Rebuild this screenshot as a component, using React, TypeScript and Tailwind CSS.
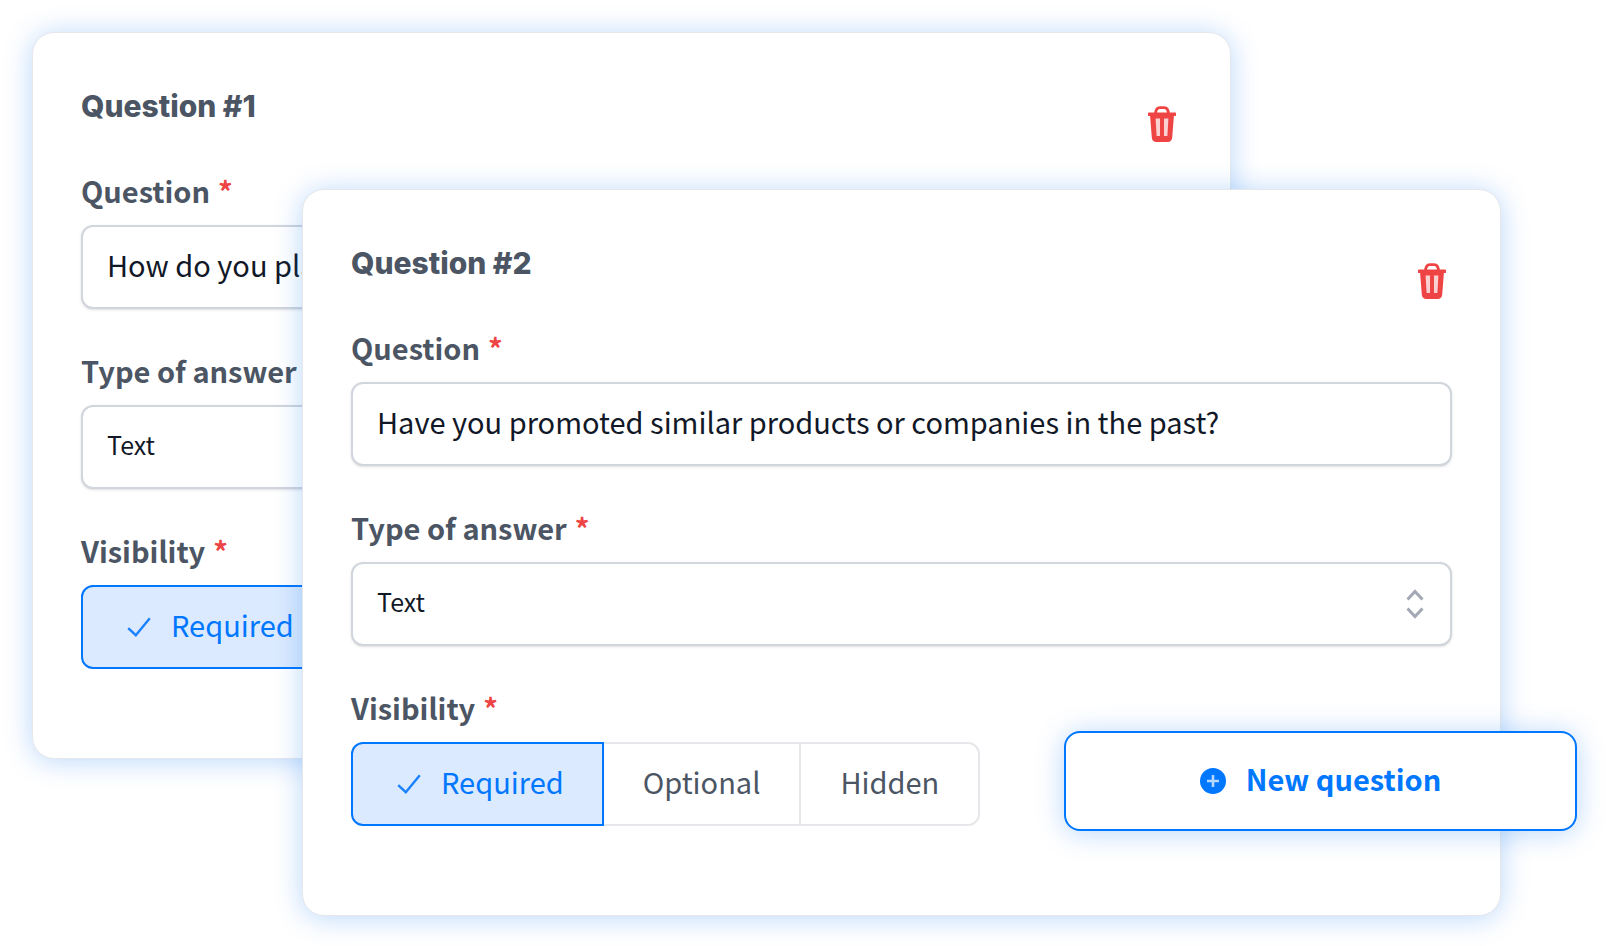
import { useState, type ReactNode } from "react";

const GLOW = "shadow-[0_2px_28px_rgba(0,110,240,0.28)]";

function TrashIcon() {
  return (
    <svg viewBox="0 0 28 36" className="h-9 w-7" aria-hidden="true">
      <path d="M7.500 8.500C7.500 4 9 1.600 12 1.600h4c3 0 4.500 2.400 4.500 6.900" fill="none" stroke="#ef4444" strokeWidth="2.800" />
      <path d="M1 6.600h26a1 1 0 0 1 0 3.400h-1.100L24.200 31.500A4.500 4.500 0 0 1 19.700 36H8.300A4.500 4.500 0 0 1 3.800 31.500L2.100 10H1a1 1 0 0 1 0-3.400z" fill="#ef4444" />
      <path d="M7.600 12.500h4.400v17.500H8.600zM16 12.500h4.400l-1 17.500H16z" fill="#fbd0d0" />
    </svg>
  );
}

function CheckIcon() {
  return (
    <svg viewBox="0 0 24 20" className="h-5 w-6" fill="none" stroke="#1a82ff" strokeWidth="2.400" aria-hidden="true">
      <path d="M1.200 11.200l7.600 7L22.800 1.200" />
    </svg>
  );
}

function SelectorIcon() {
  return (
    <svg viewBox="0 0 18 30" className="pointer-events-none absolute right-7 top-[27px] h-[30px] w-[18px]" fill="none" stroke="#a3a9b4" strokeWidth="3" aria-hidden="true">
      <path d="M1.500 10.500L9 2.500l7.500 8M1.500 19.500l7.500 8 7.500-8" />
    </svg>
  );
}

function PlusCircleIcon() {
  return (
    <svg viewBox="0 0 26 26" className="size-[26px]" aria-hidden="true">
      <circle cx="13" cy="13" r="13" fill="#0077ff" />
      <path d="M13 7v12M7 13h12" stroke="#b5d8ff" strokeWidth="2.600" />
    </svg>
  );
}

function Star() {
  return <span className="ml-2 text-[#ef4444]">*</span>;
}

const LABEL = "block text-[29px] leading-10 font-bold text-[#4b5563]";
const FIELD =
  "block h-[84px] w-full rounded-xl border-2 border-gray-300 bg-white px-6 text-[#111827] shadow-sm outline-none";

function Choice({ name, text, checked, onSelect, shape }: { name: string; text: string; checked: boolean; onSelect: () => void; shape: string }) {
  return (
    <label
      className={`flex h-[84px] cursor-pointer items-center gap-5 border-2 text-[29px] leading-10 ${shape} ${
        checked ? "z-10 border-[#0077ff] bg-blue-100 pr-[38px] pl-11 text-[#0077ff]" : "border-gray-200 bg-white px-[39px] text-[#4b5563]"
      }`}
    >
      <input type="radio" name={name} checked={checked} onChange={onSelect} className="sr-only" />
      {checked && <CheckIcon />}
      <span className="pb-1.5">{text}</span>
    </label>
  );
}

function QuestionCard({ number, question, className, children }: { number: number; question: string; className: string; children?: ReactNode }) {
  const [visibility, setVisibility] = useState("Required");
  const [text, setText] = useState(question);
  const id = `question-${number}`;
  const shapes: Record<string, string> = {
    Required: "rounded-l-xl",
    Optional: "-ml-0.5",
    Hidden: "-ml-0.5 rounded-r-xl",
  };
  return (
    <section className={`relative isolate col-start-1 row-start-1 rounded-[22px] border border-gray-200 bg-white px-12 pt-[53px] pb-[89px] ${GLOW} ${className}`}>
      <div className="mb-11 flex h-10 items-start justify-between">
        <h2 className="font-['Inter',sans-serif] text-[30px] leading-10 font-extrabold text-[#4b5563]">Question #{number}</h2>
        <button type="button" aria-label={`Delete question ${number}`} className="mt-5 mr-1.5">
          <TrashIcon />
        </button>
      </div>
      <div className="flex flex-col gap-[41px]">
        <div>
          <label htmlFor={`${id}-text`} className={`${LABEL} mb-[15px]`}>
            Question<Star />
          </label>
          <input id={`${id}-text`} type="text" value={text} onChange={(e) => setText(e.target.value)} className={`${FIELD} pb-1.5 text-[29px]`} />
        </div>
        <div>
          <label htmlFor={`${id}-type`} className={`${LABEL} mb-[15px]`}>
            Type of answer<Star />
          </label>
          <div className="relative">
            <select id={`${id}-type`} className={`${FIELD} appearance-none pb-1 text-[25px]`}>
              <option>Text</option>
            </select>
            <SelectorIcon />
          </div>
        </div>
        <fieldset>
          <legend className={`${LABEL} mb-[15px]`}>
            Visibility<Star />
          </legend>
          <div className="flex">
            {["Required", "Optional", "Hidden"].map((option) => (
              <Choice key={option} name={`${id}-visibility`} text={option} checked={visibility === option} onSelect={() => setVisibility(option)} shape={shapes[option]} />
            ))}
          </div>
        </fieldset>
      </div>
      {children}
    </section>
  );
}

export default function App() {
  return (
    <main className="grid min-h-screen content-start bg-white pt-8 pr-[105px] pb-8 pl-8 font-['Noto_Sans_CJK_JP','Noto_Sans_CJK_SC',sans-serif]">
      <QuestionCard number={1} question="How do you plan to promote us?" className="mr-[270px] mb-[157px]" />
      <QuestionCard number={2} question="Have you promoted similar products or companies in the past?" className="mt-[157px] ml-[270px]">
        <button
          type="button"
          className={`absolute -right-[77px] bottom-[84px] z-20 flex h-[100px] w-[513px] items-center justify-center gap-5 rounded-2xl border-2 border-[#0077ff] bg-white text-[29px] leading-10 font-bold text-[#0077ff] ${GLOW}`}
        >
          <PlusCircleIcon />
          <span className="pb-1.5">New question</span>
        </button>
      </QuestionCard>
    </main>
  );
}
